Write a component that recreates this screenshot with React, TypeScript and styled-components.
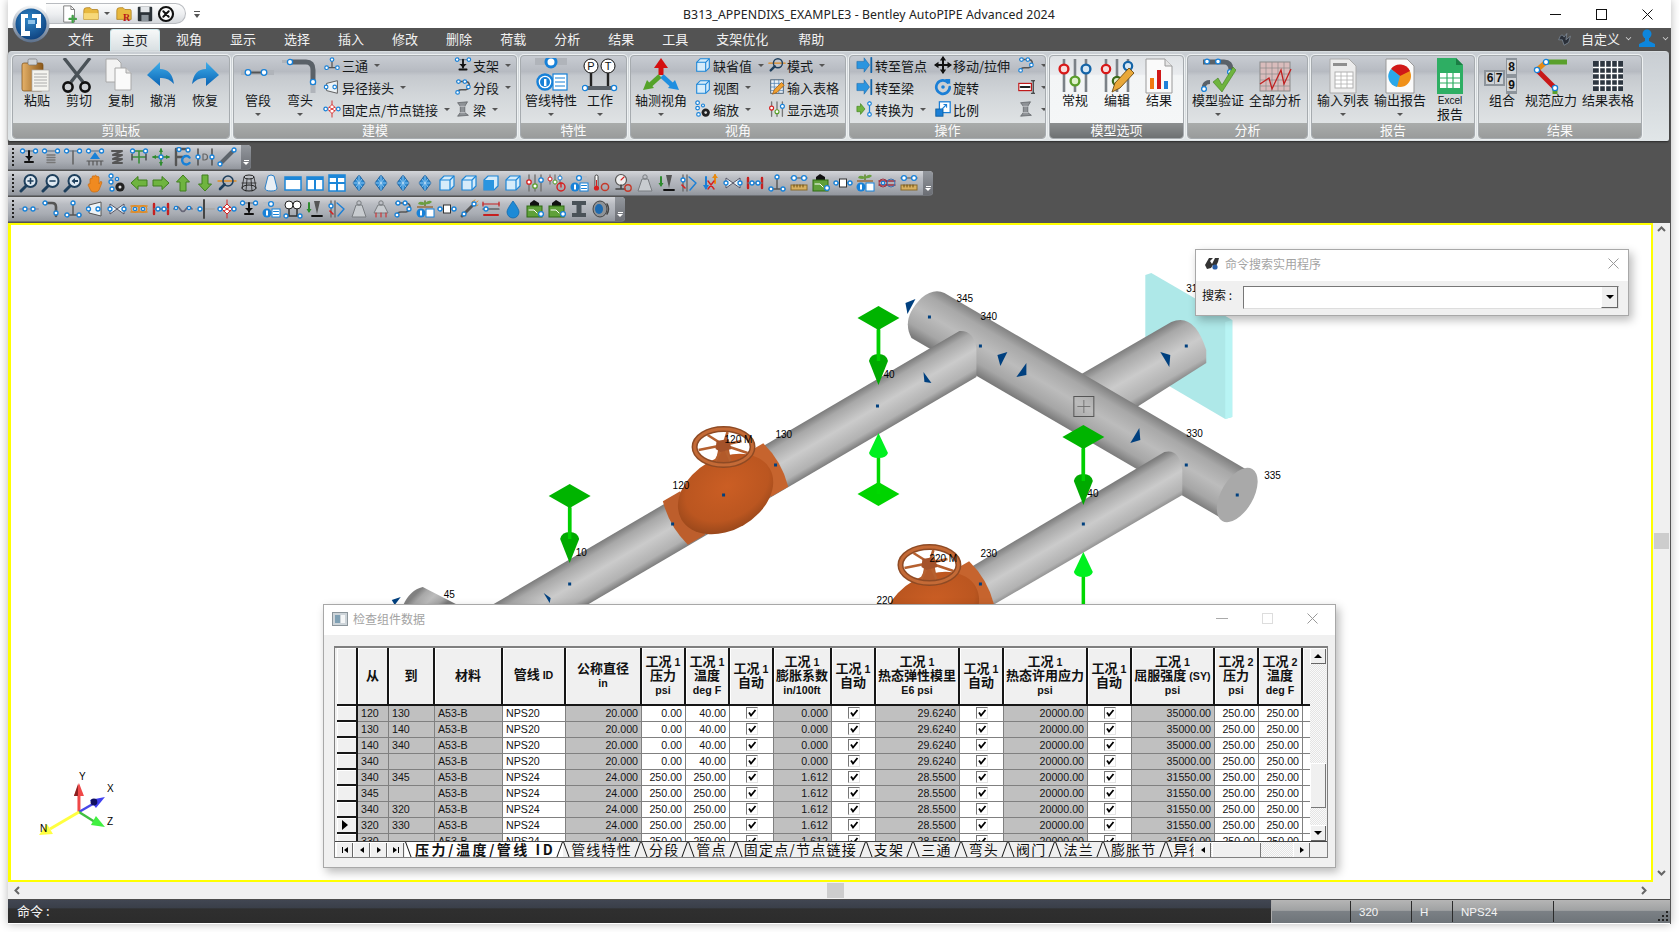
import React from 'react';
import styled, { createGlobalStyle } from 'styled-components';

const GlobalStyle = createGlobalStyle`
  html, body { margin: 0; padding: 0; background: #fff; height: 932px; overflow: hidden; }
  #root { height: 932px; }
  * { box-sizing: border-box; }
`;

const CJK = `"Noto Sans CJK SC", "Noto Sans", sans-serif`;
const LATIN = `"Liberation Sans", "Noto Sans CJK SC", sans-serif`;

/* ---------- shell ---------- */
const Page = styled.div`
  width: 1679px; height: 932px; padding-left: 8px; background: #fff;
`;
const Win = styled.div`
  position: relative; width: 1663px; height: 924px; display: flex; flex-direction: column;
  background: #535353; font-family: ${CJK};
  box-shadow: 0 0 9px rgba(0,0,0,.28);
`;
const TitleBar = styled.div`
  height: 28px; background: #fff; display: flex; align-items: center; flex: none;
`;
const Qat = styled.div`
  margin-left: 38px; height: 21px; width: 140px; margin-top: -1px; padding-left: 15px;
  display: flex; align-items: center; gap: 3px;
  background: linear-gradient(#fdfdfd, #eceef0 55%, #d5d8dc);
  border: 1px solid #b9bcc0; border-left: none; border-radius: 0 12px 12px 0;
`;
const QatCaret = styled.span`
  display: block; flex: none; margin: 0 2px 0 1px;
  border-left: 3px solid transparent; border-right: 3px solid transparent; border-top: 3px solid #555;
`;
const QatMore = styled.span`
  margin-left: 8px; width: 6px; height: 7px; display: block;
  border-top: 1px solid #555; position: relative;
  &::after { content: ''; display: block; margin-top: 2px; border: 3px solid transparent; border-top: 4px solid #555; border-bottom: none; }
`;
const TitleText = styled.div`
  margin-left: 483px; font: 12.3px "Noto Sans", sans-serif; color: #222; white-space: nowrap; letter-spacing: 0.07px;
`;
const WinButtons = styled.div`
  margin-left: auto; display: flex; align-items: center; height: 28px; padding-right: 18px; gap: 35px;
`;
const LogoSpot = styled.div`
  position: absolute; left: 4px; top: 5px; width: 38px; height: 38px; z-index: 5;
`;
const TabsBar = styled.div`
  height: 23px; flex: none; background: #535353; display: flex; align-items: flex-end; padding-left: 46px;
`;
const MenuTab = styled.div<{ $active?: boolean }>`
  height: 22px; padding: 0 14px; font-size: 13px; line-height: 20px; white-space: nowrap;
  color: ${p => (p.$active ? '#1f2326' : '#f2f2f2')};
  &:nth-child(14) { margin-left: 2px; }
  ${p => p.$active ? `
    background: linear-gradient(#f6f8f8, #d8dfe2);
    border: 1px solid #cfe9ee; border-bottom: none; border-radius: 3px 3px 0 0; padding: 0 11px; margin: 0 2px;
  ` : ''}
`;
const CustomArea = styled.div`
  margin-left: auto; height: 23px; display: flex; align-items: center; color: #f2f2f2; font-size: 13px; padding: 0 3px 3px 0; gap: 6px;
`;
const MiniCaret = styled.span`
  display: block; width: 5px; height: 5px; border-right: 1px solid #ddd; border-bottom: 1px solid #ddd; transform: scale(.8) rotate(45deg); margin-top: -2px;
`;

/* ---------- ribbon ---------- */
const Ribbon = styled.div`
  height: 90px; flex: none; display: flex; gap: 3px; padding: 3px 0 0 4px; margin-right: 2px;
  background: linear-gradient(#c9ced3, #e1e6e8); border-top: 1px solid #d8dde0; border-radius: 4px 4px 2px 2px;
  box-shadow: 0 1px 2px rgba(0,0,0,.5);
`;
const Group = styled.div<{ $w: number; $on?: boolean }>`
  width: ${p => p.$w}px; height: 84px; flex: none; display: flex; flex-direction: column;
  border: 1px solid #a6abaf; border-radius: 4px; overflow: hidden;
  box-shadow: 0 0 0 1px #eef1f2;
  background: ${p => p.$on
    ? 'linear-gradient(#dfe2e5, #e9ebee 22%, #f3f5f6 24%, #f5f7f8)'
    : 'linear-gradient(#c8ccd2, #b6bac1 19%, #c5c9ce 24%, #d3d7da 50%, #e6e9ea)'};
`;
const GroupBody = styled.div<{ $pad?: number }>`
  height: 67px; display: flex; padding-left: ${p => p.$pad || 0}px; flex: none;
`;
const GroupLabel = styled.div<{ $on?: boolean }>`
  flex: 1; text-align: center; font-size: 13px; line-height: 14px; color: #fbfbfb;
  background: ${p => p.$on ? 'linear-gradient(#8c8f90, #6e7172)' : 'linear-gradient(#a9acab, #999b9b)'};
`;
const BigButton = styled.div<{ $w: number }>`
  width: ${p => p.$w}px; flex: none; display: flex; flex-direction: column; align-items: center;
  color: #15181a; font-size: 13px; white-space: nowrap; line-height: 16px; padding-top: 2px;
`;
const BigIcon = styled.div`
  width: 36px; height: 36px; flex: none; margin-bottom: 0;
`;
const BigText = styled.div`
  margin-top: -2px; height: 16px;
`;
const TinyText = styled.div`
  font: 10px/11px ${LATIN}; margin-top: 1px; height: 13px;
`;
const Caret = styled.span`
  display: inline-block; width: 0; height: 0; flex: none;
  border-left: 3px solid transparent; border-right: 3px solid transparent; border-top: 3px solid #555;
`;
const BigCaret = styled(Caret)`
  margin-top: 5px;
`;
const SmallCol = styled.div<{ $w?: number; $ml?: number }>`
  ${p => p.$w ? `width: ${p.$w}px;` : ''} margin-left: ${p => p.$ml || 0}px; flex: none; display: flex; flex-direction: column; margin-top: -2px;
`;
const SmallRow = styled.div`
  height: 22px; display: flex; align-items: center; font-size: 13px; color: #15181a; white-space: nowrap; gap: 1px;
`;
const SmallIcon = styled.span`
  width: 18px; height: 18px; flex: none; display: block;
`;
const RowCaret = styled(Caret)`
  margin-left: 5px;
`;

/* ---------- toolbars ---------- */
const ToolArea = styled.div`
  flex: none; height: 82px; padding-top: 4px; display: flex; flex-direction: column; gap: 1px;
`;
const ToolBar = styled.div<{ $w: number }>`
  width: ${p => p.$w}px; height: 25px; display: flex; align-items: center; border-radius: 0 4px 4px 0;
  background: linear-gradient(#d3d5d9, #b9bcc2 30%, #a8acb3 70%, #92969d);
  border-bottom: 1px solid #6e7176;
`;
const Grip = styled.div`
  width: 11px; height: 18px; flex: none; padding-left: 4px; display: flex; flex-direction: column; justify-content: space-between;
  &::before { content: ''; display: block; width: 2px; height: 18px;
    background: repeating-linear-gradient(#222 0 2px, transparent 2px 4px); }
`;
const ToolIcons = styled.div`
  display: flex; gap: 2px; flex: none;
`;
const ToolIconBox = styled.span`
  width: 20px; height: 20px; display: block;
`;
const ToolCap = styled.div`
  margin-left: auto; width: 10px; height: 100%; border-radius: 0 4px 4px 0; flex: none;
  background: linear-gradient(#94989e, #6b6e74); display: flex; flex-direction: column; align-items: center; justify-content: flex-end; padding-bottom: 4px; gap: 1px;
  &::before { content: ''; width: 5px; height: 1px; background: #fff; }
  &::after { content: ''; border: 3px solid transparent; border-top: 3px solid #fff; border-bottom: none; }
`;

/* ---------- work area ---------- */
const Work = styled.div`
  flex: 1; min-height: 0; display: flex; flex-direction: column; background: #f0f0f0;
  border-right: 1px solid #555; position: relative;
`;
const WorkRow = styled.div`
  flex: 1; min-height: 0; display: flex;
`;
const Canvas = styled.div`
  flex: 1; position: relative; background: #fff; border: 2px solid #ffff00; border-left-width: 3px; overflow: hidden;
`;
const Scene = styled.svg`
  display: block; width: 100%; height: 100%;
`;
const VBar = styled.div`
  width: 17px; flex: none; background: #f0f0f0; display: flex; flex-direction: column; align-items: center; justify-content: space-between; padding: 2px 0 5px; position: relative;
`;
const VThumb = styled.div`
  position: absolute; left: 1px; right: 1px; top: 310px; height: 16px; background: #cdcdcd;
`;
const HBar = styled.div`
  height: 17px; flex: none; background: #f0f0f0; display: flex; align-items: center; justify-content: space-between; padding: 0 22px 0 5px; position: relative;
`;
const HThumb = styled.div`
  position: absolute; left: 819px; top: 1px; bottom: 1px; width: 17px; background: #cdcdcd;
`;
const StatusBar = styled.div`
  height: 25px; flex: none; display: flex; border-top: 1px solid #4c4c4c; border-bottom: 1px solid #fff;
`;
const StatusCmd = styled.div`
  width: 1264px; flex: none; color: #f4f4f4; font-size: 13px; padding: 1px 0 0 9px; line-height: 19px;
  background: linear-gradient(#414652 0, #3a3f49 35%, #2f2f2f 38%, #2c2c2c);
  border-right: 1px solid #aaa;
`;
const StatusRest = styled.div`
  flex: 1; display: flex; align-items: center; position: relative;
  background: linear-gradient(#b5b5b5, #a0a2a3 45%, #7b8085 50%, #6e7479);
`;
const StatusCell = styled.div<{ $w: number }>`
  width: ${p => p.$w}px; flex: none; height: 21px; padding-left: 8px; font: 11.5px/22px ${LATIN}; color: #f4f4f4; border-left: 1px solid #2b2b2b;
  &:first-child { border-left: none; }
`;
const Grippy = styled.svg`
  position: absolute; right: 1px; bottom: 1px;
`;

/* ---------- floating dialogs ---------- */
const Dialog = styled.div<{ $x: number; $y: number; $w: number; $h: number }>`
  position: absolute; left: ${p => p.$x}px; top: ${p => p.$y}px; width: ${p => p.$w}px; height: ${p => p.$h}px;
  background: #f0f0f0; border: 1px solid #a8a8a8; box-shadow: 3px 4px 9px rgba(0,0,0,.28);
  display: flex; flex-direction: column;
`;
const DlgHeader = styled.div<{ $h: number; $lift: number }>`
  height: ${p => p.$h}px; flex: none; background: #fff; display: flex; align-items: center; padding: 0 0 ${p => p.$lift}px 8px; gap: 5px; color: #a3a3a3; font-size: 12px;
`;
const DlgTools = styled.div<{ $pad: number }>`
  margin-left: auto; display: flex; align-items: center; gap: 34px; padding-right: ${p => p.$pad}px;
`;
const SearchRow = styled.div`
  flex: 1; display: flex; align-items: center; padding: 0 9px 2px 6px; font-size: 12px; color: #111;
`;
const SearchLabel = styled.span`
  width: 41px; flex: none; margin-top: -5px;
`;
const SearchBox = styled.div`
  flex: 1; height: 23px; background: #fff; border: 1px solid #777; border-bottom-color: #ddd; border-right-color: #ddd; display: flex; justify-content: flex-end;
`;
const Combo = styled.div`
  width: 17px; height: 21px; background: #f0f0f0; border-right: 1px solid #666; border-bottom: 1px solid #666; border-left: 1px solid #fff; display: flex; align-items: center; justify-content: center;
`;
const BlackCaret = styled.span`
  display: block; border-left: 4px solid transparent; border-right: 4px solid transparent; border-top: 4px solid #000;
`;
const GridFrame = styled.div`
  margin: 11px 7px 0 10px; height: 212px; border: 1px solid #808080; border-top-width: 2px; background: #f0f0f0; display: flex; flex-direction: column; overflow: hidden;
`;
const GridMain = styled.div`
  height: 193px; display: flex; flex: none;
`;
const GridView = styled.div`
  width: 975px; flex: none; overflow: hidden; padding-left: 2px;
`;
const Table = styled.table`
  border-collapse: separate; border-spacing: 0; table-layout: fixed; width: 1000px; font: 10.67px ${LATIN}; color: #141414;
`;
const Th = styled.th`
  height: 58px; padding: 0 0 3px; background: #f0f0f0; border-right: 2px solid #161616; border-bottom: 2px solid #161616; box-shadow: inset 1px 1px 0 #fff;
  text-align: center; vertical-align: middle; font: bold 13px/14px ${CJK}; color: #111; white-space: nowrap; overflow: hidden;
`;
const ThLine = styled.div`
  display: block; height: 14px; line-height: 14px;
`;
const ThSmall = styled.span`
  font: bold 10.67px/14px ${LATIN};
`;
const Td = styled.td<{ $grey?: boolean; $right?: boolean; $center?: boolean }>`
  height: 16px; padding: 0 3px; white-space: nowrap; overflow: hidden; line-height: 15px;
  background: ${p => (p.$grey ? '#c0c0c0' : '#fff')};
  text-align: ${p => (p.$right ? 'right' : p.$center ? 'center' : 'left')};
  border-right: 1px solid #808080; border-bottom: 1px solid #808080;
`;
const RowHead = styled.td`
  height: 16px; padding: 0 0 0 5px; background: #f0f0f0; border-right: 2px solid #161616; border-bottom: 2px solid #161616; box-shadow: inset 1px 1px 0 #fff;
`;
const RowArrow = styled.span`
  display: block; border-top: 5px solid transparent; border-bottom: 5px solid transparent; border-left: 6px solid #000;
`;
const Check = styled.span`
  display: inline-block; width: 12px; height: 12px; vertical-align: -2px; background: #fff; border: 1px solid #777; border-right-color: #e4e4e4; border-bottom-color: #e4e4e4;
`;
const VGridBar = styled.div`
  width: 16px; flex: none; display: flex; flex-direction: column; position: relative; background-color: #f0f0f0;
  background-image: repeating-conic-gradient(#e4e4e4 0 25%, #fafafa 0 50%); background-size: 2px 2px;
`;
const ArrowBtn = styled.div<{ $w?: number; $h?: number }>`
  width: ${p => p.$w || 16}px; height: ${p => p.$h || 16}px; flex: none; background: #f0f0f0; box-shadow: inset 1px 1px 0 #fff, inset -1px -1px 0 #666; display: flex; align-items: center; justify-content: center;
`;
const VGridThumb = styled.div`
  position: absolute; top: 115px; height: 45px; left: 0; right: 0; background: #f0f0f0; box-shadow: inset 1px 1px 0 #fff, inset -1px -1px 0 #777;
`;
const VSpacer = styled.div`
  flex: 1;
`;
const UpTri = styled.span`
  display: block; border-left: 4px solid transparent; border-right: 4px solid transparent; border-bottom: 4px solid #000;
`;
const GridFoot = styled.div`
  height: 17px; flex: none; display: flex; border-top: 1px solid #444; background: #fff;
`;
const NavBtns = styled.div`
  display: flex; flex: none; padding-left: 1px;
`;
const NavBtn = styled.div`
  width: 17px; height: 16px; background: #f0f0f0; box-shadow: inset 1px 1px 0 #fff, inset -1px -1px 0 #666; display: flex; align-items: center; justify-content: center;
`;
const SheetTabs = styled.div`
  width: 790px; flex: none; display: flex; overflow: hidden; padding-left: 1px; background: #f0f0f0;
`;
const SheetTab = styled.div<{ $active?: boolean }>`
  position: relative; flex: none; height: 16px; white-space: nowrap; padding: 0 ${p => (p.$active ? 8 : 9)}px 0 ${p => (p.$active ? 10 : 8)}px;
  font-size: 14px; line-height: 15px; letter-spacing: ${p => (p.$active ? '2.5px' : '1.2px')};
  font-weight: ${p => (p.$active ? 700 : 400)}; color: #111; background: ${p => (p.$active ? '#fff' : 'transparent')};
  &::before { content: ''; position: absolute; left: 3px; top: 0; bottom: 0; width: 1px; background: #111; transform: skewX(20deg); }
  &::after { content: ''; position: absolute; right: 3px; top: 0; bottom: 0; width: 1px; background: #111; transform: skewX(-20deg); }
`;
const HGrid = styled.div`
  flex: 1; display: flex; background-color: #f0f0f0;
  background-image: repeating-conic-gradient(#e4e4e4 0 25%, #fafafa 0 50%); background-size: 2px 2px;
`;
const HGridThumb = styled.div`
  width: 49px; height: 16px; flex: none; margin-left: 1px; background: #f0f0f0; box-shadow: inset 1px 1px 0 #fff, inset -1px -1px 0 #777;
`;
const Corner = styled.div`
  width: 17px; flex: none; background: #f0f0f0;
`;

/* ---------- icon parts ---------- */
const Nd = ({ x, y, r = 2 }: { x: number; y: number; r?: number }) => (
  <circle cx={x} cy={y} r={r} fill="#fff" stroke="#1781d8" strokeWidth={1.3} />
);
const S = ({ d, c = '#555', w = 1.5 }: { d: string; c?: string; w?: number }) => (
  <path d={d} fill="none" stroke={c} strokeWidth={w} strokeLinecap="round" strokeLinejoin="round" />
);
const F = ({ d, c = '#555' }: { d: string; c?: string }) => <path d={d} fill={c} />;

const I: Record<string, React.ReactNode> = {
  spt: <><S d="M3 4H17" c="#789" /><Nd x={3.5} y={4} /><Nd x={16.5} y={4} /><S d="M10 4V13" c="#111" w={2} /><F d="M6 9H14L10 13Z" c="#111" /><S d="M6 15H14" c="#111" w={2} /></>,
  spring: <><S d="M3 4H17" c="#789" /><Nd x={3.5} y={4} /><Nd x={16.5} y={4} /><S d="M6 8H14M6 10.5H14M6 13H14M6 15.5H14" c="#777" w={1.4} /></>,
  rod: <><S d="M3 4H17" c="#789" /><Nd x={3.5} y={4} /><Nd x={16.5} y={4} /><S d="M10 4V17" c="#666" w={1.6} /></>,
  hang: <><S d="M3 4H17" c="#789" /><Nd x={3.5} y={4} /><Nd x={16.5} y={4} /><F d="M10 5L15 12H5Z" c="#1781d8" /><S d="M2 14H18M4 14V18M8 14V18M12 14V18M16 14V18" c="#555" w={1.2} /></>,
  snub: <><S d="M5 4H15L6 8H15L6 12H15L6 16H15" c="#555" w={2} /></>,
  guide: <><S d="M3 4H17M10 4V16M4 10H16" c="#3b8f3b" w={1.6} /><Nd x={3.5} y={4} /><Nd x={16.5} y={4} /><S d="M3 7V13M17 7V13" c="#333" w={1.2} /></>,
  cross: <><S d="M10 2V18M2 10H18" c="#2e8b2e" w={1.4} /><F d="M10 1L12 5H8ZM10 19L12 15H8ZM1 10L5 8V12ZM19 10L15 8V12Z" c="#2e8b2e" /><Nd x={10} y={10} /></>,
  cee: <><S d="M3 2H14M3 10H10M3 2V18" c="#555" w={2.4} /><Nd x={6} y={2.5} /><Nd x={15} y={3} /><S d="M16.5 10.5A4.2 4.2 0 1 0 16.5 16" c="#1781d8" w={2.4} /></>,
  bars: <><S d="M3 2V18M17 2V18" c="#555" w={1.6} /><Nd x={3} y={10} /><Nd x={17} y={10} /><S d="M8 7V13H9.5A3 3 0 0 0 9.5 7Z" c="#666" w={1.2} /></>,
  pen: <><S d="M5 15L15 5" c="#5d646b" w={4} /><Nd x={3} y={17} /><Nd x={17} y={3} /></>,
  zoomIn: <><circle cx="11.5" cy="8" r="6" fill="#dfe9f2" stroke="#1e3f5c" strokeWidth="2" /><S d="M7 13L2 18" c="#1e3f5c" w={3} /><S d="M9 8H14M11.5 5.5V10.5" c="#1e3f5c" w={1.6} /></>,
  zoomOut: <><circle cx="11.5" cy="8" r="6" fill="#dfe9f2" stroke="#1e3f5c" strokeWidth="2" /><S d="M7 13L2 18" c="#1e3f5c" w={3} /><S d="M9 8H14" c="#1e3f5c" w={1.6} /></>,
  zoomWin: <><circle cx="11.5" cy="8" r="6" fill="#dfe9f2" stroke="#1e3f5c" strokeWidth="2" /><S d="M7 13L2 18" c="#1e3f5c" w={3} /><F d="M8.5 8L12 5V7H15V9H12V11Z" c="#1e3f5c" /></>,
  hand: <><path d="M5 11V6Q6 4.5 7 6V3.5Q8.2 2 9.3 3.5V3Q10.5 1.5 11.7 3V4Q13 2.7 14 4V11L15.5 8.5Q17 8 16.8 10L14 17Q13 19 10 19H8Q6 19 5 16L3 12Q3.5 10 5 11Z" fill="#f08a20" stroke="#c96a10" strokeWidth=".7" /></>,
  dots: <><Nd x={4} y={3} /><Nd x={4} y={9} /><Nd x={5} y={16} /><Nd x={10} y={6} r={1.6} /><circle cx="13" cy="14" r="4.6" fill="#222" /><circle cx="13" cy="14" r="1.5" fill="#ddd" /></>,
  left: <path d="M2 10L9 3.5V7H18V13H9V16.5Z" fill="#6fb43f" stroke="#3f7f1c" strokeWidth="1" />,
  right: <path d="M18 10L11 3.5V7H2V13H11V16.5Z" fill="#6fb43f" stroke="#3f7f1c" strokeWidth="1" />,
  up: <path d="M10 2L16.5 9H13V18H7V9H3.5Z" fill="#6fb43f" stroke="#3f7f1c" strokeWidth="1" />,
  down: <path d="M10 18L16.5 11H13V2H7V11H3.5Z" fill="#6fb43f" stroke="#3f7f1c" strokeWidth="1" />,
  mode: <><S d="M1 8H19" c="#e08a20" w={1.4} /><circle cx="11" cy="8" r="5" fill="none" stroke="#1e3f5c" strokeWidth="1.6" /><S d="M7.5 11.5L3 16" c="#1e3f5c" w={2.6} /></>,
  wire: <><ellipse cx="10" cy="4" rx="5" ry="2" fill="none" stroke="#222" /><ellipse cx="10" cy="15" rx="7" ry="3" fill="none" stroke="#222" /><S d="M5 4L3 15M15 4L17 15M8 6L7 18M12 6L13 18M3 10H17" c="#222" w={.8} /></>,
  cone: <path d="M7 3Q10 1 13 3L16 15Q16 18 10 18Q4 18 4 15Z" fill="#e9eff5" stroke="#2a80c8" strokeWidth="1" />,
  win1: <><rect x="2" y="4" width="16" height="13" fill="#fff" stroke="#1c86d8" strokeWidth="1.5" /><rect x="2" y="4" width="16" height="3" fill="#1c86d8" /></>,
  win2: <><rect x="2" y="4" width="16" height="13" fill="#fff" stroke="#1c86d8" strokeWidth="1.5" /><rect x="2" y="4" width="16" height="3" fill="#1c86d8" /><rect x="9" y="5" width="2" height="12" fill="#1c86d8" /></>,
  win4: <><rect x="2" y="2" width="16" height="16" fill="#fff" stroke="#1c86d8" strokeWidth="1.5" /><rect x="9" y="2" width="2" height="16" fill="#1c86d8" /><rect x="2" y="9" width="16" height="2" fill="#1c86d8" /><rect x="2" y="2" width="16" height="3" fill="#1c86d8" /></>,
  gem: <><path d="M10 2L16 10L10 18L4 10Z" fill="#2b8bd4" stroke="#1b5f9c" /><path d="M10 2V18M4 10H16M7 6L13 14M13 6L7 14" stroke="#cfe7fa" strokeWidth=".6" /></>,
  cube: <><path d="M3 7L7 3H17V13L13 17H3Z" fill="#d6ecfa" stroke="#1c86d8" strokeWidth="1.2" /><path d="M3 7H13V17M13 7L17 3" fill="none" stroke="#1c86d8" strokeWidth="1.2" /></>,
  cubeF: <><path d="M3 7L7 3H17V13L13 17H3Z" fill="#d6ecfa" stroke="#1c86d8" strokeWidth="1.2" /><rect x="3" y="7" width="10" height="10" fill="#2a95e0" /></>,
  sl: <><S d="M4 2V18M10 2V18M16 2V18" c="#777" w={1.5} /><circle cx="4" cy="9" r="2.2" fill="#fff" stroke="#d62020" strokeWidth="1.3" /><circle cx="10" cy="13" r="2.2" fill="#fff" stroke="#5aa02c" strokeWidth="1.3" /><circle cx="16" cy="7" r="2.2" fill="#fff" stroke="#1781d8" strokeWidth="1.3" /></>,
  sl2: <><S d="M3 2V11M8 2V11M13 2V11" c="#777" w={1.3} /><circle cx="3" cy="6" r="2" fill="#fff" stroke="#d62020" /><circle cx="8" cy="9" r="2" fill="#fff" stroke="#5aa02c" /><circle cx="13" cy="5" r="2" fill="#fff" stroke="#1781d8" /><circle cx="14" cy="14" r="4" fill="none" stroke="#d62020" strokeWidth="1.4" /><S d="M14 10V14" c="#d62020" w={1.4} /></>,
  info: <><rect x="2" y="3" width="16" height="4" fill="#b8bdc4" /><Nd x={10} y={5} r={2.4} /><circle cx="6" cy="14" r="4.5" fill="#1781d8" /><rect x="5" y="11.5" width="2" height="5" fill="#fff" /><rect x="11" y="10" width="8" height="8" fill="#fff" stroke="#1781d8" /><S d="M12.5 12.5H17.5M12.5 15.5H17.5" c="#1781d8" w={1} /></>,
  thermo: <><rect x="4" y="2" width="3" height="12" rx="1.5" fill="#fff" stroke="#333" strokeWidth=".9" /><circle cx="5.5" cy="15" r="2.6" fill="#d62020" /><rect x="5" y="7" width="1" height="7" fill="#d62020" /><circle cx="14" cy="14" r="3.6" fill="none" stroke="#c53a2a" strokeWidth="1.5" /></>,
  gauge: <><circle cx="8" cy="7" r="5.5" fill="#eee" stroke="#555" strokeWidth="1.2" /><S d="M8 7L11 4" c="#d62020" w={1.1} /><S d="M8 12V15M3 16H12" c="#444" w={1.6} /><circle cx="15" cy="15" r="3.2" fill="none" stroke="#c53a2a" strokeWidth="1.4" /></>,
  weight: <><path d="M7 6H13L17 18H3Z" fill="#c8ccd0" stroke="#787c80" strokeWidth="1" /><circle cx="10" cy="4" r="2.2" fill="none" stroke="#787c80" /></>,
  weightR: <><path d="M7 6H13L17 14H3Z" fill="#c8ccd0" stroke="#787c80" strokeWidth="1" /><circle cx="10" cy="4" r="2.2" fill="none" stroke="#787c80" /><S d="M5 14V18M10 14V18M15 14V18" c="#d62020" w={1} /></>,
  load: <><F d="M9 2H15L12 15Z" c="#555" /><S d="M7 17H17" c="#111" w={1.8} /><S d="M4 4V12" c="#2e8b2e" w={2} /><F d="M1.5 10H6.5L4 14Z" c="#2e8b2e" /></>,
  stress: <><S d="M4 2V18M8 2V18" c="#666" w={1.3} /><S d="M10 4L17 10L11 17" c="#1b7fd6" w={1.4} /><S d="M3 12L6 15" c="#d62020" w={1.6} /><Nd x={4} y={7} /></>,
  pointLoad: <><S d="M5 4V15" c="#1b7fd6" w={2} /><F d="M2 12H8L5 17Z" c="#1b7fd6" /><S d="M14 10V2" c="#e88a10" w={2} /><F d="M11 5H17L14 1Z" c="#e88a10" /><S d="M7 8L13 16M13 8L7 16" c="#d62020" w={1.4} /></>,
  valve: <><path d="M3 5L17 15V5L3 15Z" fill="#eef4f8" stroke="#556" strokeWidth="1" /><Nd x={3} y={10} /><Nd x={17} y={10} /></>,
  flexO: <><S d="M2 7H18M2 13H18" c="#e28a20" w={1.6} /><ellipse cx="6" cy="10" rx="4" ry="3.5" fill="none" stroke="#e28a20" /><ellipse cx="14" cy="10" rx="4" ry="3.5" fill="none" stroke="#e28a20" /><Nd x={6} y={10} r={1.6} /><Nd x={14} y={10} r={1.6} /></>,
  flange: <><S d="M3 5V15M17 5V15" c="#c62020" w={2.4} /><S d="M3 10H17" c="#777" /><Nd x={7} y={10} /><Nd x={13} y={10} /></>,
  tee: <><S d="M2 16H18M10 16V5" c="#555" w={1.4} /><Nd x={10} y={4} /><Nd x={4} y={16} /><Nd x={16} y={16} /></>,
  ruler: <><rect x="2" y="12" width="16" height="5" fill="#d8b060" stroke="#8a6a2a" /><S d="M5 12V14M8 12V14M11 12V14M14 12V14" c="#6a4a10" w={1} /><S d="M2 5H18" c="#777" w={1.6} /><Nd x={5} y={5} r={2.4} /><Nd x={15} y={5} r={2.4} /></>,
  plant: <><F d="M9 1L14 4V7H5V4Z" c="#111" /><rect x="2" y="7" width="15" height="11" fill="#5fa03a" stroke="#2e6a12" /><S d="M4 11H9L12 14" c="#fff" w={1} /><Nd x={16} y={15} r={2.4} /></>,
  block: <><S d="M1 10H6M14 10H19" c="#1781d8" w={1.2} /><rect x="6.5" y="6" width="7" height="8" fill="#fff" stroke="#333" /><Nd x={3} y={10} /><Nd x={17} y={10} /></>,
  pinfo: <><S d="M10 2V7" c="#5a7a20" w={1.4} /><F d="M10 4Q4 1 3 5Q8 7 10 5ZM10 4Q15 0 17 3Q14 6 10 5Z" c="#6aa040" /><rect x="2" y="7" width="16" height="2" fill="#a08060" /><circle cx="6" cy="14" r="4.5" fill="#1781d8" /><rect x="5" y="11.5" width="2" height="5" fill="#fff" /><rect x="11" y="10" width="8" height="8" fill="#fff" stroke="#1781d8" /></>,
  joint: <><S d="M2 8H18M2 12H18" c="#a03040" w={1.6} /><ellipse cx="6" cy="10" rx="4" ry="4" fill="none" stroke="#a03040" /><ellipse cx="14" cy="10" rx="4" ry="4" fill="none" stroke="#3a70b0" /><Nd x={6} y={10} r={1.6} /></>,
  node: <><S d="M1 10H19" c="#99a" w={2} /><Nd x={6} y={10} /><Nd x={14} y={10} /></>,
  elbow: <><S d="M3 4H11Q15 4 15 8V17" c="#555" w={2.6} /><Nd x={4} y={4} /><Nd x={15} y={14} /></>,
  reducer: <><path d="M4 6L16 3V17L4 14Z" fill="#eef3f6" stroke="#555" /><Nd x={3.5} y={10} /><Nd x={13} y={10} /></>,
  wave: <><S d="M1 10Q4 5 7 10T13 10T19 10" c="#667" w={1.5} /><Nd x={3} y={9} r={1.6} /><Nd x={16} y={9} r={1.6} /></>,
  cutPipe: <><S d="M1 10H19" c="#aaa" w={2} /><S d="M9 1V19" c="#444" w={2} /><Nd x={5} y={10} /></>,
  anchor: <><S d="M10 1V19M1 10H19" c="#d62020" w={1} /><path d="M10 5L15 10L10 15L5 10Z" fill="#fff" stroke="#d62020" /><Nd x={3} y={10} /><Nd x={17} y={10} /><S d="M7 8L13 12M13 8L7 12" c="#d62020" w={1} /></>,
  pt: <><circle cx="6" cy="6" r="4" fill="#fff" stroke="#222" /><circle cx="14" cy="6" r="4" fill="#fff" stroke="#222" /><S d="M6 10V17M14 10V17M3 17H17" c="#333" w={1.5} /><Nd x={3} y={17} /><Nd x={17} y={17} /></>,
  curve: <><S d="M3 4H12Q17 4 17 8T13 13H8Q4 13 4 17" c="#555" w={1.7} /><Nd x={5} y={4} /><Nd x={12} y={4} /><Nd x={16} y={10} /><Nd x={4} y={16} /></>,
  spark: <><S d="M3 17L13 7" c="#555" w={3} /><S d="M14 6L19 2M13 3L16 1M17 7L19 6" c="#d89030" w={1} /><Nd x={15} y={5} /><Nd x={5} y={15} /></>,
  expRed: <><S d="M2 5H18" c="#c62020" w={1.2} /><S d="M3 16H17" c="#c62020" w={2} /><S d="M2 3V7M18 3V7" c="#c62020" w={1.2} /><S d="M2 10H18" c="#3a3a3a" w={1.2} /><Nd x={5} y={10} /></>,
  drop: <path d="M10 2Q16 10 16 13A6 6 0 0 1 4 13Q4 10 10 2Z" fill="#1d8ad6" stroke="#0f6aaf" strokeWidth=".8" />,
  ibeam: <path d="M3 2H17V6H12.5V14H17V18H3V14H7.5V6H3Z" fill="#4a5258" />,
  sound: <><ellipse cx="9" cy="10" rx="7" ry="8" fill="#8e9296" stroke="#444" /><ellipse cx="8" cy="10" rx="4" ry="5" fill="#1d6ab0" /><S d="M16 5Q19 10 16 15" c="#444" w={1.5} /></>,
  beam3d: <><path d="M4 3L15 2L12 7V14L16 17L4 18L7 14V7Z" fill="#8e9296" stroke="#5a5e62" strokeWidth=".8" /><S d="M7 7L12 7M7 14H12" c="#cfd2d5" w={.8} /></>,
  tblEdit: <><rect x="3" y="2" width="14" height="15" fill="#eaf0f6" stroke="#44576a" /><S d="M3 6H17M3 10H17M3 14H17M7 2V17M12 2V17" c="#4b7db0" w={.8} /><path d="M5 18L7 13L15 5L18 8L10 16Z" fill="#f0a030" stroke="#a05a10" strokeWidth=".8" /></>,
  goto: <><path d="M1 6H9V2L15 10L9 18V14H1Z" fill="#2a95e0" stroke="#1264a8" strokeWidth=".6" /><S d="M17 2V18" c="#1264a8" w={2} /></>,
  convert: <><path d="M1 7H5V4L10 10L5 16V13H1Z" fill="#6fb43f" stroke="#3f7f1c" strokeWidth=".7" /><S d="M15 2V18" c="#1b7fd6" w={1.4} /><Nd x={15} y={4} /><Nd x={15} y={16} /></>,
  move: <><S d="M10 2V18M2 10H18" c="#111" w={2.2} /><F d="M10 0L13.5 5H6.5ZM10 20L13.5 15H6.5ZM0 10L5 6.5V13.5ZM20 10L15 6.5V13.5Z" c="#111" /></>,
  rotate: <><S d="M15.5 5A7.5 7.5 0 1 0 17.5 10" c="#1b7fd6" w={3} /><F d="M12 1H18V7Z" c="#1b7fd6" /><circle cx="10" cy="10" r="2" fill="#1b7fd6" /></>,
  scale: <><rect x="6" y="2" width="12" height="12" fill="#fff" stroke="#1b7fd6" strokeWidth="1.4" /><rect x="2" y="10" width="8" height="8" fill="#1b7fd6" stroke="#0f5f9f" /><S d="M8 11L14 5M11 5H14V8" c="#1b7fd6" w={1.2} /></>,
  frame: <><rect x="2" y="6" width="14" height="8" fill="#fff" stroke="#c01818" strokeWidth="1.3" /><S d="M4 10H14" c="#222" w={2} /><S d="M18 3V17M16 3H20M16 17H20" c="#222" w={1.2} /></>,
  teeS: <><S d="M3 13H17M10 13V5" c="#555" w={1.4} /><Nd x={10} y={4} /><Nd x={4} y={13} /><Nd x={16} y={13} /></>,
  newDoc: <><path d="M3 1H11L15 5V19H3Z" fill="#fff" stroke="#777" /><path d="M11 1V5H15" fill="none" stroke="#777" /><S d="M13 12V19M9.5 15.5H16.5" c="#43a047" w={2.6} /></>,
  folder: <><path d="M2 6Q2 3 5 3H9L11 5H17Q18 5 18 7V16H2Z" fill="#e8b83e" stroke="#a9791a" strokeWidth=".8" /><path d="M2 9H18V16H2Z" fill="#f7d878" /></>,
  folderR: <><path d="M2 6Q2 3 5 3H9L11 5H17Q18 5 18 7V16H2Z" fill="#e8b83e" stroke="#a9791a" strokeWidth=".8" /><text x="9" y="18" fontFamily="Liberation Serif" fontWeight="700" fontSize="11" fill="#b8181a">R</text></>,
  save: <><rect x="2" y="2" width="16" height="16" rx="1" fill="#2b3238" /><rect x="5" y="2" width="10" height="6" fill="#e4e7ea" /><rect x="6" y="11" width="8" height="7" fill="#8b949b" /></>,
  stop: <><circle cx="10" cy="10" r="7.8" fill="#fff" stroke="#111" strokeWidth="2.4" /><S d="M7 7L13 13M13 7L7 13" c="#111" w={2.2} /></>,
};

const Ico = ({ n, s = 20 }: { n: string; s?: number }) => (
  <svg width={s} height={s} viewBox="0 0 20 20" style={{ display: 'block' }}>{I[n]}</svg>
);

const Big: Record<string, React.ReactNode> = {
  clip: <><defs><linearGradient id="cb" x1="0" y1="0" x2="1" y2="0"><stop offset="0" stopColor="#e6b26a" /><stop offset="1" stopColor="#8a5718" /></linearGradient></defs><rect x="3" y="5" width="21" height="28" rx="2" fill="url(#cb)" stroke="#7a4c12" strokeWidth=".7" /><rect x="9" y="1" width="9" height="6" rx="1.5" fill="#d0d4d8" stroke="#777" strokeWidth=".7" /><rect x="13" y="12" width="17" height="21" fill="#f4f4ef" stroke="#aaa" strokeWidth=".7" /><path d="M15 16H28M15 19H28M15 22H28M15 25H28M15 28H28" stroke="#9a9a9a" strokeWidth=".8" /></>,
  scissors: <><path d="M3 0L22 24M29 0L10 24" stroke="#4a5258" strokeWidth="3.4" fill="none" /><circle cx="7" cy="29" r="4.6" fill="none" stroke="#111" strokeWidth="2.6" /><circle cx="24" cy="29" r="4.6" fill="none" stroke="#111" strokeWidth="2.6" /></>,
  copy: <><path d="M3 1H14L18 5V24H3Z" fill="#f3f3f3" stroke="#a8a8a8" /><path d="M12 10H23L28 15V32H12Z" fill="#fafafa" stroke="#a8a8a8" /><path d="M23 10V15H28" fill="#ddd" stroke="#a8a8a8" /></>,
  undo: <><defs><linearGradient id="ub" x1="0" y1="0" x2="0" y2="1"><stop offset="0" stopColor="#3faeea" /><stop offset="1" stopColor="#0a63b4" /></linearGradient></defs><path d="M1 15L14 2V9Q26 9 28 24Q22 17 14 18V26Z" transform="translate(1 2)" fill="url(#ub)" /></>,
  redo: <><defs><linearGradient id="rb" x1="0" y1="0" x2="0" y2="1"><stop offset="0" stopColor="#3faeea" /><stop offset="1" stopColor="#0a63b4" /></linearGradient></defs><path d="M29 15L16 2V9Q4 9 2 24Q8 17 16 18V26Z" transform="translate(3 2)" fill="url(#rb)" /></>,
  seg: <><rect x="1" y="12" width="33" height="5" fill="#b0b4ba" /><path d="M7 14.5H24" stroke="#555" strokeWidth="2" /><Nd x={8} y={14.5} r={2.8} /><Nd x={24} y={14.5} r={2.8} /></>,
  elbow: <><path d="M0 2H9V5H0Z" fill="#b0b4ba" /><path d="M8 4H24Q31 4 31 12V27" fill="none" stroke="#5a6168" strokeWidth="5" /><rect x="28.5" y="27" width="5" height="8" fill="#b0b4ba" /><Nd x={8} y={4} r={2.6} /><Nd x={31} y={24} r={2.6} /></>,
  prop: <><rect x="2" y="0" width="32" height="7" fill="#b0b4ba" /><circle cx="18" cy="4" r="5" fill="#fff" stroke="#1781d8" strokeWidth="3" /><circle cx="12" cy="24" r="7.5" fill="#fff" stroke="#1781d8" strokeWidth="2.4" /><circle cx="12" cy="24" r="5" fill="#1781d8" /><rect x="11" y="21" width="2.4" height="7" fill="#fff" /><rect x="20" y="16" width="14" height="16" fill="#fff" stroke="#1781d8" strokeWidth="1.2" /><path d="M22 20H32M22 24H32M22 28H32" stroke="#1781d8" strokeWidth="1.2" /></>,
  pt: <><circle cx="9" cy="8" r="7" fill="#fff" stroke="#111" /><circle cx="26" cy="8" r="7" fill="#fff" stroke="#111" /><text x="9" y="12" textAnchor="middle" fontFamily="Liberation Sans" fontSize="11" fill="#111">P</text><text x="26" y="12" textAnchor="middle" fontFamily="Liberation Sans" fontSize="11" fill="#111">T</text><path d="M9 15V30M26 15V30" stroke="#222" strokeWidth="2.4" /><path d="M3 30H32" stroke="#5a6168" strokeWidth="4" /><Nd x={3} y={30} r={2.6} /><Nd x={32} y={30} r={2.6} /></>,
  axes: <><path d="M18 17V9" stroke="#d40f0f" strokeWidth="5" /><path d="M18 0L25 10H11Z" fill="#d40f0f" /><path d="M17 18L6 28" stroke="#55a32a" strokeWidth="5" /><path d="M0 32L4 22L11 30Z" fill="#55a32a" /><path d="M19 18L30 28" stroke="#1f8fe0" strokeWidth="5" /><path d="M36 32L32 22L25 30Z" fill="#1f8fe0" /></>,
  sliders: <><path d="M7 1V34M18 1V34M29 1V34" stroke="#7b8187" strokeWidth="2.6" /><circle cx="7" cy="11" r="4.4" fill="#f6dddd" stroke="#d81818" strokeWidth="2.4" /><circle cx="18" cy="23" r="4.4" fill="#dff0cc" stroke="#5a9e2a" strokeWidth="2.4" /><circle cx="29" cy="11" r="4.4" fill="#d8e8f4" stroke="#1565a8" strokeWidth="2.4" /></>,
  slEdit: <><path d="M7 1V34M18 1V34M29 1V34" stroke="#7b8187" strokeWidth="2.6" /><circle cx="7" cy="11" r="4.2" fill="#f6dddd" stroke="#d81818" strokeWidth="2.2" /><circle cx="18" cy="23" r="4.2" fill="#dff0cc" stroke="#3b6a1a" strokeWidth="2.2" /><circle cx="29" cy="8" r="4.2" fill="#d8e8f4" stroke="#1565a8" strokeWidth="2.2" /><path d="M13 34L16 25L30 10L35 15L21 30Z" fill="#e9a83a" stroke="#6d4a10" strokeWidth=".9" /></>,
  chartDoc: <><path d="M5 1H24L31 8V35H5Z" fill="#fafafa" stroke="#9a9a9a" /><path d="M24 1V8H31" fill="#e4e4e4" stroke="#9a9a9a" /><rect x="9" y="20" width="4" height="11" fill="#f07a10" /><rect x="16" y="12" width="4" height="19" fill="#d01818" /><rect x="23" y="23" width="4" height="8" fill="#1f7fd8" /></>,
  check: <><path d="M3 4H24Q31 4 31 12V14" fill="none" stroke="#5a6168" strokeWidth="5" /><path d="M4 33V28Q5 24 10 24" fill="none" stroke="#5a6168" strokeWidth="4" /><Nd x={7} y={3.5} r={2.4} /><Nd x={18} y={3.5} r={2.4} /><Nd x={30} y={14} r={2.4} /><Nd x={4} y={31} r={2.4} /><path d="M13 24L18 20L22 27L33 9L36 12L22 34Z" fill="#6fb43f" stroke="#3f7f1c" strokeWidth=".6" /></>,
  graph: <><rect x="3" y="4" width="30" height="29" fill="#d9bcbc" stroke="#8a8a8a" /><path d="M3 10H33M3 16H33M3 22H33M3 28H33M9 4V33M15 4V33M21 4V33M27 4V33" stroke="#8a8a8a" strokeWidth=".7" /><path d="M3 26L12 20L15 31L24 12L27 26L34 11" fill="none" stroke="#c02020" strokeWidth="1.3" /></>,
  list: <><path d="M5 1H24L31 8V35H5Z" fill="#ececec" stroke="#aaa" /><path d="M8 5H22V8H8Z" fill="#8f8f8f" /><rect x="10" y="14" width="18" height="16" fill="#fff" stroke="#b0b0b0" /><path d="M10 18H28M10 22H28M10 26H28M16 14V30M22 14V30" stroke="#b0b0b0" strokeWidth=".8" /></>,
  pie: <><path d="M4 1H25L32 8V35H4Z" fill="#fafafa" stroke="#999" /><circle cx="18" cy="18" r="11" fill="#f09018" /><path d="M18 18L9 11A11 11 0 0 1 28 13Z" fill="#d01818" /><path d="M18 18L9 11A11 11 0 0 0 15 29Z" fill="#2aa8ea" /></>,
  excel: <><path d="M5 0H24L31 7V36H5Z" fill="#2eae63" /><path d="M24 0V7H31Z" fill="#1a7e44" /><rect x="8" y="15" width="20" height="15" fill="#fff" /><path d="M8 20H28M8 25H28M15 15V30M21 15V30" stroke="#2eae63" strokeWidth="1.2" /></>,
  combo: <><rect x="0" y="12" width="21" height="16" fill="#8d949b" /><rect x="22" y="0" width="11" height="36" fill="#8d949b" /><rect x="2" y="14" width="8" height="12" fill="#cfd3d7" /><rect x="11" y="14" width="8" height="12" fill="#cfd3d7" /><rect x="23" y="2" width="9" height="14" fill="#cfd3d7" /><rect x="23" y="20" width="9" height="13" fill="#cfd3d7" /><text x="6" y="24" textAnchor="middle" fontFamily="Liberation Mono" fontSize="12" fontWeight="700" fill="#111">6</text><text x="15" y="24" textAnchor="middle" fontFamily="Liberation Mono" fontSize="12" fontWeight="700" fill="#111">7</text><text x="27.5" y="13" textAnchor="middle" fontFamily="Liberation Mono" fontSize="12" fontWeight="700" fill="#111">8</text><text x="27.5" y="31" textAnchor="middle" fontFamily="Liberation Mono" fontSize="12" fontWeight="700" fill="#111">9</text></>,
  stress: <><path d="M13 4H34" stroke="#5aa02c" strokeWidth="5" fill="none" /><path d="M4 12L13 4" stroke="#e88a10" strokeWidth="5" /><path d="M4 12L22 30" stroke="#c81818" strokeWidth="5" /><path d="M22 28V36" stroke="#5aa02c" strokeWidth="5" /><Nd x={13} y={4} r={2.6} /><Nd x={4} y={12} r={2.6} /><Nd x={22} y={30} r={2.6} /></>,
  grid: <><rect x="3" y="3" width="30" height="30" fill="#2d3640" /><path d="M3 9.5H33M3 15.5H33M3 21.5H33M3 27.5H33M9.5 3V33M15.5 3V33M21.5 3V33M27.5 3V33" stroke="#fff" strokeWidth="1.4" /></>,
};

const BigIco = ({ n }: { n: string }) => (
  <BigIcon><svg width="36" height="36" viewBox="0 0 36 36" style={{ display: 'block' }}>{Big[n]}</svg></BigIcon>
);

const BigBtn = ({ n, t, w, caret }: { n: string; t: string; w: number; caret?: boolean }) => (
  <BigButton $w={w}>
    <BigIco n={n} />
    <BigText>{t}</BigText>
    {caret && <BigCaret />}
  </BigButton>
);
const Small = ({ n, t, caret }: { n: string; t?: string; caret?: boolean }) => (
  <SmallRow>
    <SmallIcon><Ico n={n} s={18} /></SmallIcon>
    {t}
    {caret && <RowCaret />}
  </SmallRow>
);

/* ---------- data ---------- */
const menus = ['文件', '主页', '视角', '显示', '选择', '插入', '修改', '删除', '荷载', '分析', '结果', '工具', '支架优化', '帮助'];

const t1 = ['spt', 'spring', 'rod', 'hang', 'snub', 'guide', 'cross', 'cee', 'bars', 'pen'];
const t2 = ['zoomIn', 'zoomOut', 'zoomWin', 'hand', 'dots', 'left', 'right', 'up', 'down', 'mode', 'wire', 'cone', 'win1', 'win2', 'win4', 'gem', 'gem', 'gem', 'gem', 'cube', 'cube', 'cubeF', 'cube', 'sl', 'sl2', 'info', 'thermo', 'gauge', 'weight', 'load', 'stress', 'pointLoad', 'valve', 'flange', 'tee', 'ruler', 'plant', 'block', 'pinfo', 'joint', 'ruler'];
const t3 = ['node', 'elbow', 'tee', 'reducer', 'valve', 'flexO', 'flange', 'wave', 'cutPipe', 'anchor', 'spt', 'info', 'pt', 'load', 'stress', 'weight', 'weightR', 'curve', 'pinfo', 'block', 'spark', 'expRed', 'drop', 'plant', 'plant', 'ibeam', 'sound'];

const colW = [21, 31, 46, 68, 63, 76, 44, 44, 44, 58, 44, 84, 44, 84, 44, 83, 44, 44, 60];

const rows = [
  ['120', '130', 'NPS20', 0], ['130', '140', 'NPS20', 0], ['140', '340', 'NPS20', 0], ['340', '', 'NPS20', 0],
  ['340', '345', 'NPS24', 1], ['345', '', 'NPS24', 1], ['340', '320', 'NPS24', 1], ['320', '330', 'NPS24', 1], ['330', '', 'NPS24', 1],
] as [string, string, string, number][];

const Tick = () => (
  <Check><svg width="10" height="10" viewBox="0 0 10 10" style={{ display: 'block' }}><path d="M2 4.5L4 7.5L8.5 2" fill="none" stroke="#000" strokeWidth="1.8" /></svg></Check>
);

const HeadCase = ({ c, l2, l3 }: { c?: string; l2?: string; l3?: string }) => (
  <>
    {c && <ThLine>工况 <ThSmall>{c}</ThSmall></ThLine>}
    {l2 && <ThLine>{l2}</ThLine>}
    {l3 && <ThLine><ThSmall>{l3}</ThSmall></ThLine>}
  </>
);

const sheetTabs = ['管线特性', '分段', '管点', '固定点/节点链接', '支架', '三通', '弯头', '阀门', '法兰', '膨胀节', '异径接头'];

/* ---------- scene ---------- */
const Pipe = ({ d, id, t, b, stops }: { d: string; id: string; t: number[]; b: number[]; stops: [number, string][] }) => (
  <>
    <linearGradient id={id} gradientUnits="userSpaceOnUse" x1={t[0]} y1={t[1]} x2={b[0]} y2={b[1]}>
      {stops.map(([o, c]) => <stop key={o} offset={o} stopColor={c} />)}
    </linearGradient>
    <path d={d} fill={`url(#${id})`} />
  </>
);
const upStops: [number, string][] = [[0, '#7d7d7d'], [.16, '#a8a8a8'], [.5, '#cbcbcb'], [.85, '#b2b2b2'], [1, '#808080']];
const mainStops: [number, string][] = [[0, '#808080'], [.2, '#a8a8a8'], [.5, '#bcbcbc'], [.8, '#a6a6a6'], [1, '#7a7a7a']];

const Valve = ({ x, y, wy }: { x: number; y: number; wy: number }) => {
  const wx = x - 2;
  return (
    <g>
      <g transform={`translate(${x} ${y}) rotate(-30)`}>
        <path d="M-58 -25 H-38 V25 H-58 Q-65 0 -58 -25Z" fill="#bd5e2c" />
        <path d="M38 -25 H58 Q65 0 58 25 H38Z" fill="#c6642e" />
        <ellipse cx="0" cy="0" rx="51" ry="36" fill="url(#ball)" />
      </g>
      <path d={`M${wx - 5} ${wy} L${wx - 8} ${wy + 17} H${wx + 8} L${wx + 5} ${wy}Z`} fill="#b25a2a" />
      <ellipse cx={wx} cy={wy} rx="29" ry="18" fill="none" stroke="#8e4a24" strokeWidth="6" />
      <ellipse cx={wx} cy={wy} rx="29" ry="18" fill="none" stroke="#c46a36" strokeWidth="3" />
      <path d={`M${wx} ${wy - 2} L${wx - 16} ${wy - 12} M${wx} ${wy - 2} L${wx + 18} ${wy - 6} M${wx} ${wy - 2} L${wx - 25} ${wy + 3} M${wx} ${wy - 2} L${wx + 24} ${wy + 6} M${wx} ${wy - 2} L${wx - 8} ${wy + 14} M${wx} ${wy - 2} L${wx + 7} ${wy + 14} M${wx} ${wy - 2} L${wx + 4} ${wy - 15}`} stroke="#b5602f" strokeWidth="2.6" />
      <path d={`M${wx - 7} ${wy - 6} L${wx + 5} ${wy - 8} L${wx + 8} ${wy + 2} L${wx - 3} ${wy + 5} L${wx - 8} ${wy + 2}Z`} fill="#a4522a" />
    </g>
  );
};

const SupDown = ({ x, d, tip }: { x: number; d: number; tip: number }) => (
  <g>
    <path d={`M${x} ${d + 10}V${tip - 20}`} stroke="#00d000" strokeWidth="3.5" />
    <path d={`M${x - 21} ${d} L${x} ${d - 12} L${x + 21} ${d} L${x} ${d + 12}Z`} fill="#00b400" />
    <path d={`M${x - 9.5} ${tip - 24} L${x} ${tip} L${x + 9.5} ${tip - 24} Q${x + 8} ${tip - 31} ${x} ${tip - 31} Q${x - 8} ${tip - 31} ${x - 9.5} ${tip - 24}Z`} fill="#00aa00" />
    <path d={`M${x - 1.7} ${d + 12}H${x + 1.7}V${tip - 24}H${x - 1.7}Z`} fill="#00d000" />
  </g>
);
const SupUp = ({ x, d, tip }: { x: number; d: number; tip: number }) => (
  <g>
    <path d={`M${x - 21} ${d} L${x} ${d - 12} L${x + 21} ${d} L${x} ${d + 12}Z`} fill="#00d400" />
    <path d={`M${x} ${d}V${tip + 20}`} stroke="#00d800" strokeWidth="3.5" />
    <path d={`M${x - 9.5} ${tip + 20} L${x} ${tip} L${x + 9.5} ${tip + 20} Q${x + 8} ${tip + 25} ${x} ${tip + 25} Q${x - 8} ${tip + 25} ${x - 9.5} ${tip + 20}Z`} fill="#00f020" />
  </g>
);

const wedges = [
  '916,299 906,303 908,314', '924,372 925,382 932,383', '1008,352 998,355 1001,366', '1027,363 1017,377 1027,375',
  '1161,352 1171,355 1170,367', '1140,428 1131,443 1141,440', '544,593 551,598 550,603', '401,597 392,600 395,605',
];
const blueDots = [[930, 317], [981, 346], [1187, 346], [878, 406], [1187, 465], [1238, 495], [1084, 524], [981, 584], [673, 524], [724, 495], [776, 465], [570, 584]];
const nums: [string, number, number][] = [
  ['345', 957, 302], ['340', 981, 320], ['40', 884, 378], ['130', 776, 438], ['120', 673, 489], ['120 M', 725, 443], ['10', 576, 556],
  ['220 M', 930, 562], ['230', 981, 557], ['220', 877, 604], ['45', 444, 598], ['335', 1265, 479], ['330', 1187, 437], ['31', 1187, 292], ['40', 1088, 497],
];

const SceneArt = () => (
  <Scene viewBox="11 225 1641 655" preserveAspectRatio="none">
    <defs>
      <radialGradient id="ball" cx=".55" cy=".42" r=".62">
        <stop offset="0" stopColor="#cb5e24" />
        <stop offset=".7" stopColor="#bb5620" />
        <stop offset="1" stopColor="#94451a" />
      </radialGradient>
    </defs>
    {/* anchor plate */}
    <path d="M1146 275L1152 273L1233 320V417L1226 419L1146 372Z" fill="#aee8e8" />
    <path d="M1226 322L1233 320V417L1226 419Z" fill="#b8f4f4" />
    {/* stub pipe at lower left */}
    <Pipe id="pS" d="M403 606Q410 590 423 587L460 606Z" t={[420, 590]} b={[440, 610]} stops={mainStops} />
    <Pipe id="pB" d="M1070 381L1172 322Q1195 312 1207 350L1207 363L1125 415Z" t={[1130, 346]} b={[1158, 395]} stops={upStops} />
    <Pipe id="pM" d="M945 293L1248 470L1220 517L912 338C905 325 908 312 922 298Q934 288 945 293Z" t={[1100, 383.5]} b={[1072, 431]} stops={mainStops} />
    <ellipse cx="1238" cy="495" rx="16" ry="30" transform="rotate(30 1238 495)" fill="#a9a9a9" />
    <Pipe id="pA" d="M470 618L960 331Q974 330 977 348L977 377L560 621Z" t={[800, 425]} b={[824, 466]} stops={upStops} />
    <Pipe id="pC" d="M960 574L1165 452Q1180 448 1183 470L1183 495L980 613Z" t={[1080, 503]} b={[1104, 544]} stops={upStops} />
    <Valve x={726} y={494} wy={447} />
    <Valve x={932} y={612} wy={565} />
    <SupDown x={570} d={496} tip={563} />
    <SupDown x={879} d={318} tip={385} />
    <SupUp x={879} d={494} tip={433} />
    <SupDown x={1084} d={437} tip={505} />
    <SupUp x={1084} d={620} tip={552} />
    {wedges.map(p => <polygon key={p} points={p} fill="#00407f" />)}
    {blueDots.map(([x, y]) => <rect key={`${x}-${y}`} x={x - 1.5} y={y - 1.5} width="3" height="3" fill="#00407f" />)}
    <rect x="1074.5" y="396.5" width="20" height="20" fill="none" stroke="#555" />
    <path d="M1084.5 400V413M1078 406.5H1091" stroke="#666" strokeWidth=".8" />
    {nums.map(([t, x, y]) => (
      <text key={`${t}${x}`} x={x} y={y} fontFamily="Liberation Sans" fontSize="10" fill="#000">{t}</text>
    ))}
    {/* triad */}
    <path d="M79 812V790" stroke="#f04848" strokeWidth="3" />
    <path d="M79 783L84 796H74Z" fill="#f04848" />
    <path d="M74 796L78 784V796Z" fill="#8a2020" />
    <path d="M79 812L98 801" stroke="#4848e8" strokeWidth="2.5" />
    <path d="M105 797L96 808L90 800Z" fill="#4040f0" />
    <circle cx="94" cy="802" r="3.4" fill="#101060" />
    <path d="M79 812L95 822" stroke="#40c040" strokeWidth="2.5" />
    <path d="M105 827L91 825L96 816Z" fill="#40f040" />
    <path d="M79 812L50 829" stroke="#ffff40" strokeWidth="3" />
    <path d="M39 835L53 834L47 824Z" fill="#ffff40" />
    <text x="79" y="780" fontFamily="Liberation Sans" fontSize="10" fill="#000">Y</text>
    <text x="107" y="792" fontFamily="Liberation Sans" fontSize="10" fill="#000">X</text>
    <text x="107" y="825" fontFamily="Liberation Sans" fontSize="10" fill="#000">Z</text>
    <text x="40" y="832" fontFamily="Liberation Sans" fontSize="10" fill="#000">N</text>
  </Scene>
);

const Chev = ({ d }: { d: string }) => (
  <svg width="9" height="9" viewBox="0 0 9 9" style={{ display: 'block' }}><path d={d} fill="none" stroke="#666" strokeWidth="2" /></svg>
);
const X = ({ c = '#999', s = 11 }: { c?: string; s?: number }) => (
  <svg width={s} height={s} viewBox="0 0 11 11" style={{ display: 'block' }}><path d="M.5 .5L10.5 10.5M10.5 .5L.5 10.5" stroke={c} strokeWidth="1" /></svg>
);
const Nav = ({ d }: { d: string }) => (
  <svg width="8" height="8" viewBox="0 0 8 8" style={{ display: 'block' }}><path d={d} fill="#000" /></svg>
);

const Logo = () => (
  <svg width="38" height="38" viewBox="0 0 38 38" style={{ display: 'block' }}>
    <defs>
      <radialGradient id="lg" cx=".45" cy=".35" r=".7"><stop offset="0" stopColor="#2f86c8" /><stop offset="1" stopColor="#0d3f7c" /></radialGradient>
      <linearGradient id="lr" x1="0" y1="0" x2="0" y2="1"><stop offset="0" stopColor="#f5f6f7" /><stop offset="1" stopColor="#5b6f8a" /></linearGradient>
    </defs>
    <circle cx="19" cy="19" r="18.5" fill="url(#lr)" />
    <circle cx="19" cy="19" r="15.5" fill="url(#lg)" />
    <path d="M9 9H16V13H13V26H18V31H9ZM20 9H29V23H24V19H25V13H20Z" fill="#fff" />
    <path d="M16 15H23V19H16Z" fill="#8fc3ea" />
  </svg>
);

const App = () => (
  <>
    <GlobalStyle />
    <Page>
      <Win>
        <LogoSpot><Logo /></LogoSpot>
        <TitleBar>
          <Qat>
            <Ico n="newDoc" s={18} />
            <Ico n="folder" s={18} />
            <QatCaret />
            <Ico n="folderR" s={18} />
            <Ico n="save" s={18} />
            <Ico n="stop" s={18} />
          </Qat>
          <QatMore />
          <TitleText>B313_APPENDIXS_EXAMPLE3 - Bentley AutoPIPE Advanced 2024</TitleText>
          <WinButtons>
            <svg width="11" height="11" viewBox="0 0 11 11"><path d="M0 5.5H11" stroke="#111" /></svg>
            <svg width="11" height="11" viewBox="0 0 11 11"><rect x=".5" y=".5" width="10" height="10" fill="none" stroke="#111" /></svg>
            <X c="#111" />
          </WinButtons>
        </TitleBar>
        <TabsBar>
          {menus.map(m => <MenuTab key={m} $active={m === '主页'}>{m}</MenuTab>)}
          <CustomArea>
            <svg width="20" height="18" viewBox="0 0 20 20"><path d="M3 12Q6 3 9 9L12 5L11 12L16 8L14 15L9 18L7 12Z" fill="#2a2f38" stroke="#9ab" strokeWidth=".6" /></svg>
            <span>自定义</span>
            <MiniCaret />
            <svg width="20" height="20" viewBox="0 0 20 20"><circle cx="10" cy="6" r="4.5" fill="#0d86dc" /><path d="M8 9H12V13L18 16V19H2V16L8 13Z" fill="#0d86dc" /></svg>
            <MiniCaret />
          </CustomArea>
        </TabsBar>
        <Ribbon>
          <Group $w={218}>
            <GroupBody $pad={3}>
              <BigBtn n="clip" t="粘贴" w={42} />
              <BigBtn n="scissors" t="剪切" w={42} />
              <BigBtn n="copy" t="复制" w={42} />
              <BigBtn n="undo" t="撤消" w={42} />
              <BigBtn n="redo" t="恢复" w={42} />
            </GroupBody>
            <GroupLabel>剪贴板</GroupLabel>
          </Group>
          <Group $w={284}>
            <GroupBody $pad={2}>
              <BigBtn n="seg" t="管段" w={44} caret />
              <BigBtn n="elbow" t="弯头" w={40} caret />
              <SmallCol $w={131} $ml={3}>
                <Small n="teeS" t="三通" caret />
                <Small n="reducer" t="异径接头" caret />
                <Small n="anchor" t="固定点/节点链接" caret />
              </SmallCol>
              <SmallCol>
                <Small n="spt" t="支架" caret />
                <Small n="curve" t="分段" caret />
                <Small n="beam3d" t="梁" caret />
              </SmallCol>
            </GroupBody>
            <GroupLabel>建模</GroupLabel>
          </Group>
          <Group $w={107}>
            <GroupBody $pad={1}>
              <BigBtn n="prop" t="管线特性" w={58} caret />
              <BigBtn n="pt" t="工作" w={40} caret />
            </GroupBody>
            <GroupLabel>特性</GroupLabel>
          </Group>
          <Group $w={216}>
            <GroupBody $pad={2}>
              <BigBtn n="axes" t="轴测视角" w={56} caret />
              <SmallCol $w={74} $ml={5}>
                <Small n="cube" t="缺省值" caret />
                <Small n="cube" t="视图" caret />
                <Small n="dots" t="缩放" caret />
              </SmallCol>
              <SmallCol>
                <Small n="mode" t="模式" caret />
                <Small n="tblEdit" t="输入表格" />
                <Small n="sl" t="显示选项" />
              </SmallCol>
            </GroupBody>
            <GroupLabel>视角</GroupLabel>
          </Group>
          <Group $w={197}>
            <GroupBody $pad={6}>
              <SmallCol $w={78}>
                <Small n="goto" t="转至管点" />
                <Small n="goto" t="转至梁" />
                <Small n="convert" t="转换为" caret />
              </SmallCol>
              <SmallCol $w={83}>
                <Small n="move" t="移动/拉伸" />
                <Small n="rotate" t="旋转" />
                <Small n="scale" t="比例" />
              </SmallCol>
              <SmallCol>
                <Small n="curve" caret />
                <Small n="frame" caret />
                <Small n="beam3d" caret />
              </SmallCol>
            </GroupBody>
            <GroupLabel>操作</GroupLabel>
          </Group>
          <Group $w={135} $on>
            <GroupBody $pad={4}>
              <BigBtn n="sliders" t="常规" w={42} />
              <BigBtn n="slEdit" t="编辑" w={42} />
              <BigBtn n="chartDoc" t="结果" w={42} />
            </GroupBody>
            <GroupLabel $on>模型选项</GroupLabel>
          </Group>
          <Group $w={121}>
            <GroupBody $pad={2}>
              <BigBtn n="check" t="模型验证" w={56} caret />
              <BigBtn n="graph" t="全部分析" w={58} />
            </GroupBody>
            <GroupLabel>分析</GroupLabel>
          </Group>
          <Group $w={164}>
            <GroupBody $pad={2}>
              <BigBtn n="list" t="输入列表" w={58} caret />
              <BigBtn n="pie" t="输出报告" w={56} caret />
              <BigButton $w={44}>
                <BigIco n="excel" />
                <TinyText>Excel</TinyText>
                <BigText>报告</BigText>
              </BigButton>
            </GroupBody>
            <GroupLabel>报告</GroupLabel>
          </Group>
          <Group $w={164}>
            <GroupBody $pad={2}>
              <BigBtn n="combo" t="组合" w={42} />
              <BigBtn n="stress" t="规范应力" w={56} />
              <BigBtn n="grid" t="结果表格" w={58} />
            </GroupBody>
            <GroupLabel>结果</GroupLabel>
          </Group>
        </Ribbon>
        <ToolArea>
          <ToolBar $w={243}>
            <Grip />
            <ToolIcons>{t1.map((n, i) => <ToolIconBox key={i}><Ico n={n} /></ToolIconBox>)}</ToolIcons>
            <ToolCap />
          </ToolBar>
          <ToolBar $w={925}>
            <Grip />
            <ToolIcons>{t2.map((n, i) => <ToolIconBox key={i}><Ico n={n} /></ToolIconBox>)}</ToolIcons>
            <ToolCap />
          </ToolBar>
          <ToolBar $w={617}>
            <Grip />
            <ToolIcons>{t3.map((n, i) => <ToolIconBox key={i}><Ico n={n} /></ToolIconBox>)}</ToolIcons>
            <ToolCap />
          </ToolBar>
        </ToolArea>
        <Work>
          <WorkRow>
            <Canvas>
              <SceneArt />
              <Dialog $x={1184} $y={24} $w={434} $h={67}>
                <DlgHeader $h={31} $lift={5}>
                  <svg width="16" height="14" viewBox="0 0 16 14"><path d="M1 9L5 2H9L6 5L8 8L11 2H15L14 6L11 12L9 9L7 12L3 13Z" fill="#333" /><circle cx="11" cy="11" r="2.6" fill="#2a5ea8" /></svg>
                  命令搜索实用程序
                  <DlgTools $pad={9}><X /></DlgTools>
                </DlgHeader>
                <SearchRow>
                  <SearchLabel>搜索 :</SearchLabel>
                  <SearchBox><Combo><BlackCaret /></Combo></SearchBox>
                </SearchRow>
              </Dialog>
              <Dialog $x={312} $y={379} $w={1013} $h={264}>
                <DlgHeader $h={30} $lift={3}>
                  <svg width="16" height="14" viewBox="0 0 16 14"><rect x=".5" y=".5" width="15" height="13" fill="#cdd4d9" stroke="#8b959b" /><rect x="3" y="3" width="5" height="8" fill="#7fa0b4" /><rect x="9" y="3" width="4" height="8" fill="#f4f6f7" /></svg>
                  检查组件数据
                  <DlgTools $pad={17}>
                    <svg width="12" height="11" viewBox="0 0 12 11"><path d="M0 5.5H12" stroke="#aaa" /></svg>
                    <svg width="11" height="11" viewBox="0 0 11 11"><rect x=".5" y=".5" width="10" height="10" fill="none" stroke="#ddd" /></svg>
                    <X />
                  </DlgTools>
                </DlgHeader>
                <GridFrame>
                  <GridMain>
                    <GridView>
                      <Table>
                        <colgroup>{colW.map((w, i) => <col key={i} style={{ width: w }} />)}</colgroup>
                        <thead>
                          <tr>
                            <Th />
                            <Th>从</Th><Th>到</Th><Th>材料</Th>
                            <Th>管线 <ThSmall>ID</ThSmall></Th>
                            <Th><HeadCase l2="公称直径" l3="in" /></Th>
                            <Th><HeadCase c="1" l2="压力" l3="psi" /></Th>
                            <Th><HeadCase c="1" l2="温度" l3="deg F" /></Th>
                            <Th><HeadCase c="1" l2="自动" /></Th>
                            <Th><HeadCase c="1" l2="膨胀系数" l3="in/100ft" /></Th>
                            <Th><HeadCase c="1" l2="自动" /></Th>
                            <Th><HeadCase c="1" l2="热态弹性模里" l3="E6 psi" /></Th>
                            <Th><HeadCase c="1" l2="自动" /></Th>
                            <Th><HeadCase c="1" l2="热态许用应力" l3="psi" /></Th>
                            <Th><HeadCase c="1" l2="自动" /></Th>
                            <Th>
                              <ThLine>工况 <ThSmall>1</ThSmall></ThLine>
                              <ThLine>屈服强度 <ThSmall>(SY)</ThSmall></ThLine>
                              <ThLine><ThSmall>psi</ThSmall></ThLine>
                            </Th>
                            <Th><HeadCase c="2" l2="压力" l3="psi" /></Th>
                            <Th><HeadCase c="2" l2="温度" l3="deg F" /></Th>
                            <Th>工</Th>
                          </tr>
                        </thead>
                        <tbody>
                          {rows.map(([a, b, id, big], i) => (
                            <tr key={i}>
                              <RowHead>{i === 7 && <RowArrow />}</RowHead>
                              <Td $grey>{a}</Td>
                              <Td $grey>{b}</Td>
                              <Td $grey>A53-B</Td>
                              <Td>{id}</Td>
                              <Td $grey $right>{big ? '24.000' : '20.000'}</Td>
                              <Td $right>{big ? '250.00' : '0.00'}</Td>
                              <Td $right>{big ? '250.00' : '40.00'}</Td>
                              <Td $center><Tick /></Td>
                              <Td $grey $right>{big ? '1.612' : '0.000'}</Td>
                              <Td $center><Tick /></Td>
                              <Td $grey $right>{big ? '28.5500' : '29.6240'}</Td>
                              <Td $center><Tick /></Td>
                              <Td $grey $right>20000.00</Td>
                              <Td $center><Tick /></Td>
                              <Td $grey $right>{big ? '31550.00' : '35000.00'}</Td>
                              <Td $right>250.00</Td>
                              <Td $right>250.00</Td>
                              <Td />
                            </tr>
                          ))}
                        </tbody>
                      </Table>
                    </GridView>
                    <VGridBar>
                      <ArrowBtn><UpTri /></ArrowBtn>
                      <VGridThumb />
                      <VSpacer />
                      <ArrowBtn><BlackCaret /></ArrowBtn>
                    </VGridBar>
                  </GridMain>
                  <GridFoot>
                    <NavBtns>
                      <NavBtn><Nav d="M1 1H2V7H1ZM7 1V7L3 4Z" /></NavBtn>
                      <NavBtn><Nav d="M6 1V7L2 4Z" /></NavBtn>
                      <NavBtn><Nav d="M2 1V7L6 4Z" /></NavBtn>
                      <NavBtn><Nav d="M1 1V7L5 4ZM6 1H7V7H6Z" /></NavBtn>
                    </NavBtns>
                    <SheetTabs>
                      <SheetTab $active>压力/温度/管线 ID</SheetTab>
                      {sheetTabs.map(t => <SheetTab key={t}>{t}</SheetTab>)}
                    </SheetTabs>
                    <HGrid>
                      <ArrowBtn $w={17}><Nav d="M6 1V7L2 4Z" /></ArrowBtn>
                      <HGridThumb />
                      <VSpacer />
                      <ArrowBtn $w={17}><Nav d="M2 1V7L6 4Z" /></ArrowBtn>
                    </HGrid>
                    <Corner />
                  </GridFoot>
                </GridFrame>
              </Dialog>
            </Canvas>
            <VBar>
              <Chev d="M1 6L4.5 2.5L8 6" />
              <VThumb />
              <Chev d="M1 3L4.5 6.5L8 3" />
            </VBar>
          </WorkRow>
          <HBar>
            <Chev d="M6 1L2.5 4.5L6 8" />
            <HThumb />
            <Chev d="M3 1L6.5 4.5L3 8" />
          </HBar>
          <StatusBar>
            <StatusCmd>命令 :</StatusCmd>
            <StatusRest>
              <StatusCell $w={78} />
              <StatusCell $w={61}>320</StatusCell>
              <StatusCell $w={41}>H</StatusCell>
              <StatusCell $w={101}>NPS24</StatusCell>
              <StatusCell $w={60} />
              <Grippy width="12" height="12" viewBox="0 0 12 12"><path d="M9 1h2v2H9zM5 5h2v2H5zM9 5h2v2H9zM1 9h2v2H1zM5 9h2v2H5zM9 9h2v2H9z" fill="#222" /></Grippy>
            </StatusRest>
          </StatusBar>
        </Work>
      </Win>
    </Page>
  </>
);

export default App;
